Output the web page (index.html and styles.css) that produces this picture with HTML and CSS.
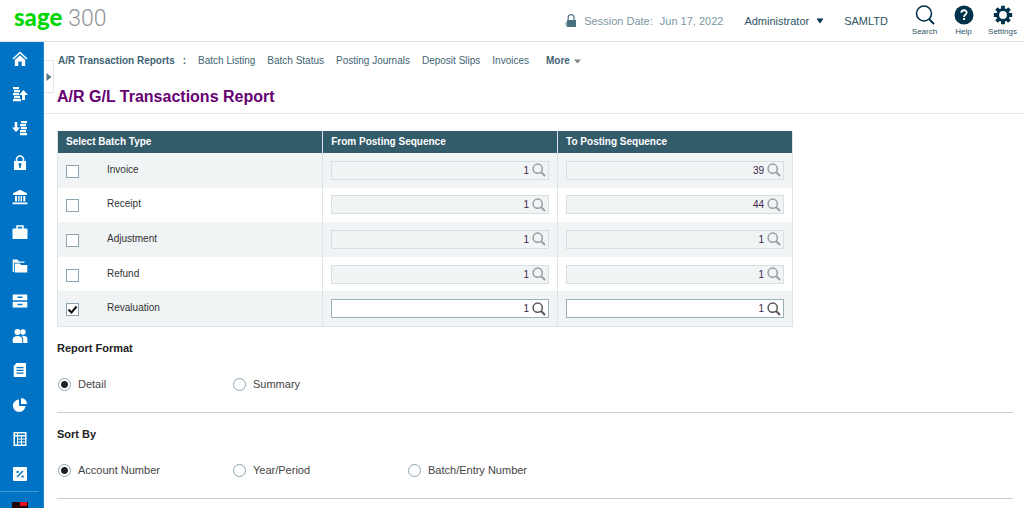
FILE: index.html
```html
<!DOCTYPE html>
<html lang="en">
<head>
<meta charset="utf-8">
<title>A/R G/L Transactions Report</title>
<link rel="stylesheet" href="styles.css">
</head>
<body>
<svg class="defs" aria-hidden="true">
  <symbol id="lens" viewBox="0 0 14 14"><circle cx="5.7" cy="5.7" r="4.6" fill="none" stroke="currentColor" stroke-width="1.5"/><path d="M9 9l4 4" stroke="currentColor" stroke-width="2"/></symbol>
</svg>
<header class="topbar">
  <div class="logo"><span class="logo-sage">sage</span><span class="logo-num">300</span></div>
  <div class="session">
    <svg width="12" height="14" viewBox="0 0 12 14"><path d="M3.2 7V3.600a2.900 2.900 0 0 1 5.800 0V7" fill="none" stroke="#55798a" stroke-width="1.300"/><path d="M2 6h9v7H2V11.500H.5v-1H2v-1H.5v-1H2z" fill="#4a7080"/></svg>
    <span>Session Date:</span><span>Jun 17, 2022</span>
  </div>
  <button class="user" type="button">Administrator <svg width="8" height="6" viewBox="0 0 8 6"><path d="M.5.500h7L4 5.500z" fill="#00324b"/></svg></button>
  <span class="company">SAMLTD</span>
  <div class="tools">
    <button class="tool" type="button"><svg width="20" height="20" viewBox="0 0 20 20"><circle cx="9" cy="8.500" r="7.500" fill="none" stroke="#00324b" stroke-width="1.600"/><path d="M14 14l5 5" stroke="#00324b" stroke-width="2"/></svg>Search</button>
    <button class="tool" type="button"><svg width="20" height="20" viewBox="0 0 20 20"><circle cx="10" cy="10" r="9.500" fill="#00324b"/><path d="M7.300 7.800c0-3.400 5.500-3.300 5.400-.2 0 2-2.600 1.900-2.600 4.300" fill="none" stroke="#fff" stroke-width="1.800"/><path d="M9.100 13h2v2h-2z" fill="#fff"/></svg>Help</button>
    <button class="tool" type="button"><svg width="20" height="20" viewBox="0 0 20 20"><g stroke="#00324b" stroke-width="3.800"><path d="M10 .8v18.400M.8 10h18.400M3.500 3.500l13 13M16.500 3.500l-13 13"/></g><circle cx="10" cy="10" r="6.800" fill="#00324b"/><circle cx="10" cy="10" r="3.900" fill="#fff"/></svg>Settings</button>
  </div>
</header>
<div class="shell">
  <aside class="sidebar">
    <nav class="side-nav" aria-label="Modules">
      <a href="#" aria-label="Home"><svg viewBox="0 0 16 16"><path d="M1 8l7-6.500L15 8" fill="none" stroke="#fff" stroke-width="1.600"/><path d="M2.800 9L8 4.300 13.200 9v6H9.700v-4.500H6.300V15H2.800z"/></svg></a>
      <a href="#" aria-label="Accounts Receivable"><svg viewBox="0 0 16 16"><path d="M1 1h6v2.200H1zM2 4h6v2.200H2zM1 7h6v2.200H1zM2 10h6v2.200H2zM1 13h8v2.200H1zM11.500 4L16 9h-3v5h-3V9H7z"/></svg></a>
      <a href="#" aria-label="Accounts Payable"><svg viewBox="0 0 16 16"><path d="M9 1h6v2.200H9zM8 4h6v2.200H8zM9 7h6v2.200H9zM8 10h6v2.200H8zM8 13h7v2.200H8zM2.700 2h2.600v5.500h3L4 12 0 7.500h2.700z"/></svg></a>
      <a href="#" aria-label="Administrative Services"><svg viewBox="0 0 16 16"><path d="M4.500 7V4.500a3.500 3.500 0 0 1 7 0V7" fill="none" stroke="#fff" stroke-width="1.700"/><path d="M2 6h12v9H2z"/><path d="M8 8a1.500 1.500 0 0 1 .8 2.800V13H7.200v-2.200A1.500 1.500 0 0 1 8 8z" fill="#0073c4"/></svg></a>
      <a href="#" aria-label="Bank Services"><svg viewBox="0 0 16 16"><path d="M8 .8l7 3.400V6H1V4.200zM3 7h2v5.500H3zM6.200 7h1.400v5.500H6.200zM8.600 7H10v5.500H8.600zM11.300 7h2v5.500h-2zM.5 13.500h15v1.700H.5z"/></svg></a>
      <a href="#" aria-label="Common Services"><svg viewBox="0 0 16 16"><path d="M5 5V2h6v3" fill="none" stroke="#fff" stroke-width="1.500"/><rect x=".5" y="4.500" width="15" height="10.500" rx="1"/></svg></a>
      <a href="#" aria-label="General Ledger"><svg viewBox="0 0 16 16"><path d="M.7 1.500h4.800L7 3.500h5.500v1.300H2V14H.7z"/><path d="M2.800 5.500h5l1.300 1.500h6.200V14.500H2.800z"/></svg></a>
      <a href="#" aria-label="Inventory Control"><svg viewBox="0 0 16 16"><path d="M.7 1.500h14.600v5.800H.7zM.7 8.800h14.600v5.700H.7z"/><path d="M5.500 3.500h5v1.600h-5zM5.500 10.700h5v1.600h-5z" fill="#0073c4"/></svg></a>
      <a href="#" aria-label="Payroll"><svg viewBox="0 0 16 16"><circle cx="5.500" cy="4" r="3"/><circle cx="11" cy="4" r="2.700"/><path d="M.7 15v-3.500Q1 8 5.500 8T10.300 11.500V15zM11.200 15v-4Q11 9 9.600 7.800 15.300 7.300 15.400 11v4z"/></svg></a>
      <a href="#" aria-label="Order Entry"><svg viewBox="0 0 16 16"><path d="M4.500 1H14v14H1.700V4z"/><path d="M4.500 5h7v1.200h-7zM4.500 7.800h7V9h-7zM4.500 10.600h7v1.200h-7z" fill="#0073c4"/></svg></a>
      <a href="#" aria-label="Purchase Orders"><svg viewBox="0 0 16 16"><path d="M7 2.500V9h6.500A6.300 6.300 0 1 1 7 2.500z"/><path d="M9 1a6 6 0 0 1 6 6H9z"/></svg></a>
      <a href="#" aria-label="Project and Job Costing"><svg viewBox="0 0 16 16"><path d="M1.500 1h13v14h-13z"/><path d="M3 2.500h2v1.500H3zM6 2.500h7v1.500H6zM3 5.500h2v8H3zM6 5.500h3v2H6zM10 5.500h3v2h-3zM6 8.500h3v2H6zM10 8.500h3v2h-3zM6 11.500h3v2H6zM10 11.500h3v2h-3z" fill="#0073c4"/></svg></a>
      <a href="#" aria-label="Tax Services"><svg viewBox="0 0 16 16"><rect x="1" y="1" width="14" height="14" rx="1"/><path d="M5 11l6-6" stroke="#0073c4" stroke-width="1.500"/><path d="M4.500 5h2.200v2H4.500zM9.500 9.500h2.200v2H9.500z" fill="#0073c4"/></svg></a>
    </nav>
    <div class="side-foot"><svg width="18" height="16" viewBox="0 0 18 16"><path d="M1 10h16v6H1z" fill="#210508"/><path d="M9 10h7v4H9z" fill="#e8101c"/></svg></div>
  </aside>
  <main class="content">
    <button class="expander" type="button" aria-label="Expand menu"><svg width="6" height="8" viewBox="0 0 6 8"><path d="M.5 0l5 4-5 4z" fill="#557585"/></svg></button>
    <nav class="crumbs" aria-label="Transaction reports">
      <strong>A/R Transaction Reports</strong><span class="colon">:</span>
      <a href="#">Batch Listing</a><a href="#">Batch Status</a><a href="#">Posting Journals</a><a href="#">Deposit Slips</a><a href="#">Invoices</a>
      <button class="more" type="button">More <svg width="7" height="5" viewBox="0 0 7 5"><path d="M0 .5h7l-3.500 4z" fill="#7b868b"/></svg></button>
    </nav>
    <h1 class="title">A/R G/L Transactions Report</h1>
    <form class="report">
      <table class="batches">
        <thead><tr><th class="type-col">Select Batch Type</th><th>From Posting Sequence</th><th>To Posting Sequence</th></tr></thead>
        <tbody>
          <tr><td><label class="pick"><input type="checkbox"><span>Invoice</span></label></td>
            <td><div class="field"><input type="text" value="1" aria-label="Invoice from" disabled><button type="button" aria-label="Find" disabled><svg><use href="#lens"/></svg></button></div></td>
            <td><div class="field"><input type="text" value="39" aria-label="Invoice to" disabled><button type="button" aria-label="Find" disabled><svg><use href="#lens"/></svg></button></div></td></tr>
          <tr><td><label class="pick"><input type="checkbox"><span>Receipt</span></label></td>
            <td><div class="field"><input type="text" value="1" aria-label="Receipt from" disabled><button type="button" aria-label="Find" disabled><svg><use href="#lens"/></svg></button></div></td>
            <td><div class="field"><input type="text" value="44" aria-label="Receipt to" disabled><button type="button" aria-label="Find" disabled><svg><use href="#lens"/></svg></button></div></td></tr>
          <tr><td><label class="pick"><input type="checkbox"><span>Adjustment</span></label></td>
            <td><div class="field"><input type="text" value="1" aria-label="Adjustment from" disabled><button type="button" aria-label="Find" disabled><svg><use href="#lens"/></svg></button></div></td>
            <td><div class="field"><input type="text" value="1" aria-label="Adjustment to" disabled><button type="button" aria-label="Find" disabled><svg><use href="#lens"/></svg></button></div></td></tr>
          <tr><td><label class="pick"><input type="checkbox"><span>Refund</span></label></td>
            <td><div class="field"><input type="text" value="1" aria-label="Refund from" disabled><button type="button" aria-label="Find" disabled><svg><use href="#lens"/></svg></button></div></td>
            <td><div class="field"><input type="text" value="1" aria-label="Refund to" disabled><button type="button" aria-label="Find" disabled><svg><use href="#lens"/></svg></button></div></td></tr>
          <tr><td><label class="pick"><input type="checkbox" checked><span>Revaluation</span></label></td>
            <td><div class="field active"><input type="text" value="1" aria-label="Revaluation from"><button type="button" aria-label="Find"><svg><use href="#lens"/></svg></button></div></td>
            <td><div class="field active"><input type="text" value="1" aria-label="Revaluation to"><button type="button" aria-label="Find"><svg><use href="#lens"/></svg></button></div></td></tr>
        </tbody>
      </table>
      <fieldset class="group">
        <legend>Report Format</legend>
        <div class="options">
          <label><input type="radio" name="format" checked><span>Detail</span></label>
          <label><input type="radio" name="format"><span>Summary</span></label>
        </div>
      </fieldset>
      <fieldset class="group">
        <legend>Sort By</legend>
        <div class="options">
          <label><input type="radio" name="sort" checked><span>Account Number</span></label>
          <label><input type="radio" name="sort"><span>Year/Period</span></label>
          <label><input type="radio" name="sort"><span>Batch/Entry Number</span></label>
        </div>
      </fieldset>
    </form>
  </main>
</div>
</body>
</html>
```
FILE: styles.css
```css
* { box-sizing: border-box; }
body { margin: 0; background: #fff; color: #333; font: 11px/14px "Liberation Sans", Arial, sans-serif; }
button, input { font: inherit; color: inherit; margin: 0; }
button { border: 0; padding: 0; background: none; }
a { color: inherit; text-decoration: none; }
svg { flex: none; }
.defs { position: absolute; width: 0; height: 0; }

.topbar { display: flex; align-items: center; height: 42px; padding: 0 2px 0 14px; border-bottom: 1px solid #e1e3e4; color: #2f5566; }
.logo { display: flex; align-items: baseline; gap: 6px; margin-right: auto; padding-bottom: 6px; line-height: 30px; }
.logo-sage { color: #00d700; font-family: Lato, sans-serif; font-weight: 900; font-size: 24px; }
.logo-num { color: #8f9597; font-family: Roboto, sans-serif; font-weight: 300; font-size: 23px; }
.session { display: flex; align-items: center; gap: 7px; margin-right: 21px; color: #7b97a3; }
.user { display: flex; align-items: center; gap: 7px; margin-right: 20px; }
.company { margin-right: 17px; }
.tools { display: flex; }
.tool { display: flex; flex-direction: column; align-items: center; gap: 2px; width: 39px; font-size: 8px; line-height: 10px; }

.shell { display: flex; min-height: calc(100vh - 42px); }
.sidebar { display: flex; flex-direction: column; width: 44px; background: #0073c4; border-right: 1px solid #2288d0; }
.side-nav { flex: 1; display: grid; grid-auto-rows: 1fr; margin-right: 4px; border-bottom: 1px solid #3f98d6; }
.side-nav a { display: flex; align-items: center; justify-content: center; }
.side-nav svg { width: 16px; height: 16px; fill: #fff; }
.side-foot { height: 16px; padding-left: 11px; }
.side-foot svg { display: block; }

.content { position: relative; flex: 1; min-width: 0; }
.expander { position: absolute; left: 0; top: 18px; width: 10px; height: 33px; border: 1px solid #e3e7e9; border-left: 0; display: flex; align-items: center; justify-content: center; }
.crumbs { display: flex; align-items: center; gap: 12px; padding: 12px 14px 0; font-size: 10px; color: #3f6473; }
.crumbs .colon { margin-left: -4px; font-weight: bold; }
.more { display: flex; align-items: center; gap: 4px; margin-left: 5px; font-weight: bold; }
.title { margin: 0; padding: 19px 13px 6px; border-bottom: 1px solid #e6e9ea; color: #660073; font-size: 16px; line-height: 20px; }

.report { padding: 17px 11px 0 13px; }
.batches { width: 100%; max-width: 736px; height: 196px; table-layout: fixed; border-collapse: separate; border-spacing: 0; border: 1px solid #dde3e6; border-top: 0; }
.batches th { height: 22px; padding: 0 8px; background: #335c6b; color: #fff; font-size: 10px; text-align: left; }
.batches .type-col { width: 36%; }
.batches td { padding: 0 8px; font-size: 10px; }
.batches th + th, .batches td + td { border-left: 1px solid #dde3e6; }
.batches tbody tr:nth-child(odd) { background: #f1f4f5; }
.pick { display: flex; align-items: center; gap: 28px; padding-top: 2px; }
.pick span { padding-bottom: 3px; }
.pick input { appearance: none; width: 13px; height: 13px; border: 1px solid #8ca5b0; background: #fff; }
.pick input:checked { background: #fff url("data:image/svg+xml,%3Csvg xmlns='http://www.w3.org/2000/svg' viewBox='0 0 11 11'%3E%3Cpath d='M1.500 5.500l3 3 5-6' fill='none' stroke='%23111' stroke-width='2'/%3E%3C/svg%3E"); }
.field { display: flex; align-items: center; height: 19px; padding-right: 2px; border: 1px solid #d7dfe2; background: #f1f4f5; color: #333; }
.field input { flex: 1; min-width: 0; height: 17px; padding: 0 3px; border: 0; background: transparent; text-align: right; color: #40264f; }
.field button { display: flex; color: #9b9ea0; }
.field svg { width: 14px; height: 14px; }
.field.active { border-color: #9ab0b9; background: #fff; }
.field.active button { color: #555; }

.group { margin: 14px 0 0; padding: 0 0 21px; border: 0; border-bottom: 1px solid #ccc; }
.group legend { padding: 0; margin-bottom: 22px; color: #222; font-weight: bold; }
.options { display: flex; flex-wrap: wrap; }
.options label { display: flex; align-items: center; gap: 7px; width: 175px; padding-left: 1px; color: #444; }
.options input { appearance: none; width: 13px; height: 13px; border: 1px solid #8ca5b0; border-radius: 50%; background: #fff; }
.options input:checked { background: radial-gradient(circle, #222 3px, #fff 4px); }
```
